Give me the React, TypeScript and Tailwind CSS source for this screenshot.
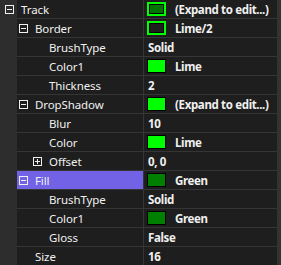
type Swatch = "track" | "border" | "lime" | "green";

type Row = {
  name: string;
  level: number;
  expander?: "minus" | "plus";
  value: string;
  swatch?: Swatch;
  selected?: boolean;
};

const rows: Row[] = [
  { name: "Track", level: 0, expander: "minus", value: "(Expand to edit...)", swatch: "track" },
  { name: "Border", level: 1, expander: "minus", value: "Lime/2", swatch: "border" },
  { name: "BrushType", level: 2, value: "Solid" },
  { name: "Color1", level: 2, value: "Lime", swatch: "lime" },
  { name: "Thickness", level: 2, value: "2" },
  { name: "DropShadow", level: 1, expander: "minus", value: "(Expand to edit...)", swatch: "lime" },
  { name: "Blur", level: 2, value: "10" },
  { name: "Color", level: 2, value: "Lime", swatch: "lime" },
  { name: "Offset", level: 2, expander: "plus", value: "0, 0" },
  { name: "Fill", level: 1, expander: "minus", value: "Green", swatch: "green", selected: true },
  { name: "BrushType", level: 2, value: "Solid" },
  { name: "Color1", level: 2, value: "Green", swatch: "green" },
  { name: "Gloss", level: 2, value: "False" },
  { name: "Size", level: 1, value: "16" },
];

const Expander = ({ kind }: { kind: "minus" | "plus" }) => (
  <svg width="9" height="9" viewBox="0 0 9 9" className="block shrink-0">
    <rect x="0.5" y="0.5" width="8" height="8" fill="none" stroke="#f0f0f0" />
    <path d="M2 4.5h5" stroke="#f0f0f0" />
    {kind === "plus" && <path d="M4.5 2v5" stroke="#f0f0f0" />}
  </svg>
);

const SwatchBox = ({ kind }: { kind: Swatch }) => {
  if (kind === "track" || kind === "border") {
    return (
      <span className="block w-[19px] h-[14px] border-2 border-[#00ff00] shrink-0">
        <span
          className={
            kind === "track"
              ? "block w-full h-full border border-black bg-[#007400]"
              : "block w-full h-full border border-black bg-[#1e1e1e]"
          }
        ></span>
      </span>
    );
  }
  return (
    <span
      className={
        kind === "lime"
          ? "block w-[19px] h-[14px] border border-black bg-[#00ff00] shrink-0"
          : "block w-[19px] h-[14px] border border-black bg-[#008000] shrink-0"
      }
    ></span>
  );
};

const PropRow = ({ row }: { row: Row }) => {
  const pad = row.level === 2 ? "pl-[16px]" : "pl-[2px]";
  return (
    <div className="flex h-[19px]">
      <div className="w-[17px] h-full bg-[#2d2d2d] flex items-center pl-[5px]">
        {row.level === 0 && row.expander && <Expander kind={row.expander} />}
      </div>
      <div className="flex flex-1 border-b border-[#353535]">
        <div
          className={`w-[126px] flex items-center ${row.level === 0 ? "pl-[4px]" : pad} ${
            row.selected ? "bg-[#7263e6]" : ""
          }`}
        >
          {row.level > 0 && (
            <span className="w-[16px] shrink-0 flex">
              {row.expander && <Expander kind={row.expander} />}
            </span>
          )}
          <span className="text-[11.5px] tracking-[-0.1px] text-[#f0f0f0] whitespace-nowrap pt-px">
            {row.name}
          </span>
        </div>
        <div
          className={`flex-1 flex items-center border-l border-[#353535] ${
            row.swatch ? "pl-[3px] gap-[9px]" : "pl-[4px]"
          }`}
        >
          {row.swatch && <SwatchBox kind={row.swatch} />}
          <span className="text-[11.5px] tracking-[-0.35px] font-bold text-[#f0f0f0] whitespace-nowrap pt-px">
            {row.value}
          </span>
        </div>
      </div>
    </div>
  );
};

export default function App() {
  return (
    <div
      className="w-[281px] h-[265px] flex bg-[#1e1e1e] overflow-hidden"
      style={{ fontFamily: '"Noto Sans", "Open Sans", sans-serif' }}
    >
      <div className="flex-1 flex flex-col">
        {rows.map((r, i) => (
          <PropRow key={i} row={r} />
        ))}
      </div>
      <div className="w-[4px] h-full bg-[#333333]"></div>
    </div>
  );
}
